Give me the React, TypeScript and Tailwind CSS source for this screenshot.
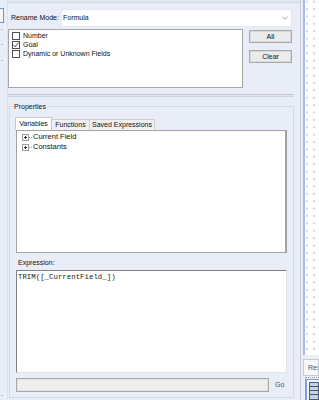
import React from "react";

function Check({ checked, label }: { checked?: boolean; label: string }) {
  return (
    <div className="h-[9px] flex items-center gap-[3px]">
      <span className="w-[8px] h-[8px] border border-[#505050] bg-white flex items-center justify-center shrink-0">
        {checked && (
          <svg width="6" height="6" viewBox="0 0 6 6">
            <path d="M0.4 2.9 L2.2 4.8 L5.6 0.6" fill="none" stroke="#333" strokeWidth="0.9" />
          </svg>
        )}
      </span>
      <span className="leading-[9px]">{label}</span>
    </div>
  );
}

function TreeRow({ label }: { label: string }) {
  return (
    <div className="h-[10px] flex items-center pl-[5px]">
      <svg width="7" height="7" viewBox="0 0 7 7" className="shrink-0">
        <rect x="0.5" y="0.5" width="6" height="6" fill="#fafafa" stroke="#9c9c9c" strokeWidth="1" />
        <path d="M2 3.5 H5 M3.5 2 V5" stroke="#333" strokeWidth="1" />
      </svg>
      <span className="w-[3px] border-t border-dotted border-[#9a9a9a] mr-[1px]" />
      <span className="text-[7.5px] leading-[10px]">{label}</span>
    </div>
  );
}

export default function App() {
  return (
    <div className="w-[319px] h-[400px] flex bg-[#e9edf7] overflow-hidden font-['Liberation_Sans',Arial,sans-serif] text-[7px] text-[#111]">
      {/* left strip */}
      <div className="w-[7px] shrink-0 flex flex-col items-start">
        <div className="mt-[8px] w-[4px] h-[15px] border-y border-r border-[#5f9ad8] bg-[#f4f7fc]" />
        <div className="mt-[6px] ml-[1px] w-[2px] h-[1px] bg-[#b9bfcc]" />
        <div className="mt-[14px] ml-[1px] w-[2px] h-[1px] bg-[#b9bfcc]" />
        <div className="mt-[15px] ml-[1px] w-[2px] h-[1px] bg-[#b9bfcc]" />
        <div className="mt-auto mb-[4px] ml-[1px] w-[2px] h-[1px] bg-[#b9bfcc]" />
      </div>

      {/* main panel */}
      <div className="w-[294px] shrink-0 flex flex-col border-l border-r border-l-[#dde2ec] border-r-[#c6ccd8]">
        <div className="h-[3px] bg-[#e0e5ee] border-b border-[#d4dae5]" />

        {/* rename mode row */}
        <div className="mt-[6px] h-[18px] flex items-center">
          <div className="w-[53px] pl-[3px] leading-[10px]">Rename Mode:</div>
          <div className="w-[231px] h-[18px] bg-white rounded-[3px] border border-[#e3e7ee] flex items-center justify-between pl-[1px] pr-[3px]">
            <span className="leading-[10px]">Formula</span>
            <svg width="6" height="4" viewBox="0 0 6 4">
              <path d="M0.5 0.8 L3 3.2 L5.5 0.8" fill="none" stroke="#9a9a9a" strokeWidth="0.9" />
            </svg>
          </div>
        </div>

        {/* list + buttons */}
        <div className="mt-[2px] flex">
          <div className="w-[235px] h-[59px] bg-white border border-[#a6a6a6] pl-[3px] pt-[1px] flex flex-col">
            <Check label="Number" />
            <Check label="Goal" checked />
            <Check label="Dynamic or Unknown Fields" />
          </div>
          <div className="ml-[6px] w-[43px] flex flex-col">
            <div className="mt-[1px] h-[13px] border border-[#a9a9a9] bg-[#ebebeb] shadow-[inset_0_0_0_1px_#d9d9d9] flex items-center justify-center leading-[10px]">
              All
            </div>
            <div className="mt-[7px] h-[13px] border border-[#a9a9a9] bg-[#ebebeb] shadow-[inset_0_0_0_1px_#d9d9d9] flex items-center justify-center leading-[10px]">
              Clear
            </div>
          </div>
        </div>

        {/* separator */}
        <div className="mt-[6px] w-[286px] h-[3px] border-t border-b border-t-[#c2c6ce] border-b-[#cfd3da] bg-[#e3e5ea]" />

        {/* properties group */}
        <div className="mt-[9px] ml-[1px] w-[285px] border border-[#d2d8e3] flex flex-col pb-[5px]">
          <div className="-mt-[6px] ml-[3px] px-[1px] w-fit h-[11px] leading-[11px] bg-[#e9edf7]">Properties</div>

          {/* tabs */}
          <div className="mt-[5px] ml-[5px] h-[13px] flex items-end">
            <div className="w-[37px] h-[13px] bg-white border-t border-l border-r border-[#c8c8c8] flex items-center justify-center leading-[10px]">
              Variables
            </div>
            <div className="w-[38px] h-[11px] bg-[#f0f0f0] border-t border-r border-[#d0d0d0] flex items-center justify-center leading-[10px]">
              Functions
            </div>
            <div className="w-[65px] h-[11px] bg-[#f0f0f0] border-t border-r border-[#d0d0d0] flex items-center justify-center leading-[10px]">
              Saved Expressions
            </div>
          </div>

          {/* tree */}
          <div className="ml-[6px] w-[271px] h-[123px] bg-white border-t border-l border-b border-[#a3a3a3] border-r-2 border-r-[#a0a0a0] pt-[1px] flex flex-col">
            <TreeRow label="Current Field" />
            <TreeRow label="Constants" />
          </div>

          {/* expression label */}
          <div className="h-[17px] pl-[8px] pt-[5px] leading-[10px]">Expression:</div>

          {/* expression textarea */}
          <div className="ml-[6px] w-[271px] h-[103px] bg-white border-t border-l border-[#808080] border-r border-b border-r-[#e4e4e4] border-b-[#e4e4e4] pl-[1px] pt-[1px]">
            <span className="font-['Liberation_Mono',monospace] text-[7.4px] leading-[9px] text-[#1a1a1a]">TRIM([_CurrentField_])</span>
          </div>

          {/* bottom row */}
          <div className="mt-[5px] ml-[6px] h-[14px] flex items-center">
            <div className="w-[253px] h-[14px] bg-[#eeeeee] border border-[#a8a8a8] shadow-[inset_0_0_0_1px_#e2e2e2]" />
            <span className="ml-[6px] leading-[10px] text-[#3e5173]">Go</span>
          </div>
        </div>
      </div>

      {/* right strip */}
      <div className="flex-1 flex flex-col overflow-hidden">
        <div className="h-[355px] flex">
          <div className="w-[2px]" />
          <div className="w-[2px] bg-[#a6bbe8]" />
          <div className="flex-1 bg-white bg-[radial-gradient(circle,#a3a8b2_0.7px,transparent_0.9px)] bg-[length:7px_7.4px] bg-[position:-1.5px_5.3px]" />
        </div>
        <div className="flex-1 bg-[#eceef3] flex flex-col">
          <div className="mt-[4px] ml-[2px] h-[17px] border border-[#c6cad2] bg-[#f6f7f9] pl-[4px] flex items-center text-[#555] whitespace-nowrap overflow-hidden leading-[10px]">
            Res
          </div>
          <div className="mt-[1px] ml-[4px] border-t border-dotted border-[#9aa0ab]" />
          <div className="mt-[1px] ml-[4px] flex-1 border-l-2 border-t border-[#7aa2e0] bg-[#f4f7fc] pl-[2px] pt-[2px]">
            <svg width="10" height="18" viewBox="0 0 10 18">
              <rect x="0.5" y="0.5" width="9" height="17" fill="#c9d2e2" stroke="#4a5a78" />
              <path d="M1 4.5 H9 M1 8.5 H9 M1 12.5 H9" stroke="#4a5a78" strokeWidth="1" />
            </svg>
          </div>
        </div>
      </div>
    </div>
  );
}
